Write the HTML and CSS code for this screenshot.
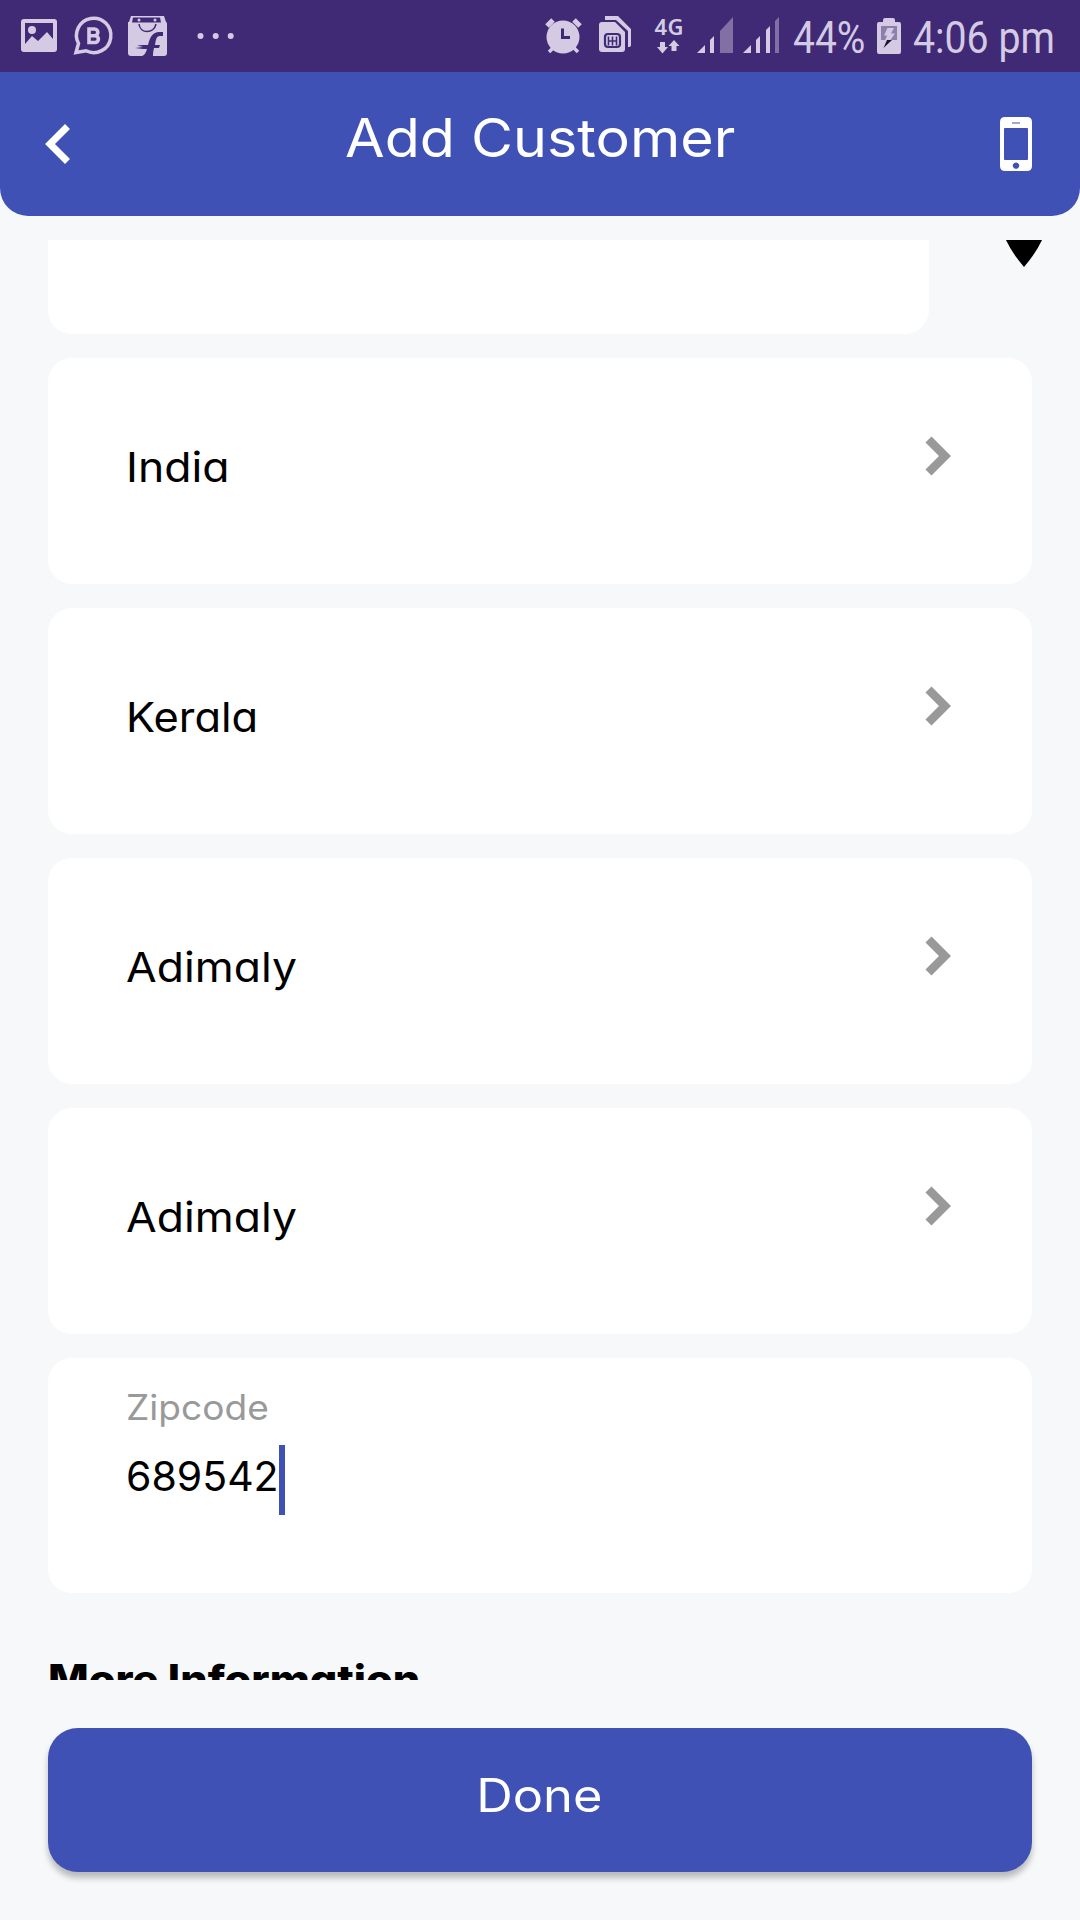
FILE: index.html
```html
<!DOCTYPE html>
<html lang="en">
<head>
<meta charset="utf-8">
<title>Add Customer</title>
<link rel="stylesheet" href="styles.css">
</head>
<body>
<div class="status-bar">
  <svg class="status-left" width="260" height="72" viewBox="0 0 260 72">
    <path fill-rule="evenodd" d="M24 19h30q3 0 3 3v27q0 3-3 3H24q-3 0-3-3V22q0-3 3-3zM25 23v21l7-8 6 5 9-9 6 7V23z"/>
    <circle cx="32" cy="30" r="4"/>
    <path class="line" d="M76 52.500L78.500 43.500A17.200 17.200 0 1 1 86 50.800z" stroke-width="3.500"/>
    <path class="line" d="M89 29h5.500a3.300 3.300 0 0 1 0 6.700H89zM89 35.700h6a3.300 3.300 0 0 1 0 6.800h-6z" stroke-width="3.600"/>
    <path d="M128 22h38q1 0 1 2v29q0 3-3 3H131q-3 0-3-3V24z"/>
    <path d="M131 16h33l2 6h-37z"/>
    <path class="cut" d="M133 17.500h27l1 5h-29z"/>
    <circle cx="139" cy="20" r="1.500"/><circle cx="155" cy="20" r="1.500"/>
    <path class="cut-line" d="M139 24c1 10 15 10 17 0" stroke-width="1.500"/>
    <path class="cut" d="M142 56c3-1 4-4 5-7h-4l-8-1 8-1-6-1.500 6-.5h5c2-8 5-13 11-13h4v4h-3c-4 0-4 4-5 9h5l-1 3h-5c-1 4-1 6-1 8z"/>
    <circle cx="200.500" cy="36" r="3"/><circle cx="215.700" cy="36" r="3"/><circle cx="230.700" cy="36" r="3"/>
  </svg>
  <svg class="status-right" width="260" height="72" viewBox="530 0 260 72">
    <circle cx="563" cy="37" r="16.500"/>
    <path class="line" d="M547 26l6-6M580 26l-6-6" stroke-width="5"/>
    <path class="line" d="M554 47l-5 5M573 47l5 5" stroke-width="3.500"/>
    <path class="cut-line" d="M562.500 28.500v9h7.500" stroke-width="3"/>
    <path d="M605 16h13l13 13v16q0 2-3 2V31l-12-11h-11q0-3 0-4z"/>
    <path d="M602 22h13l10 10v17q0 3-3 3h-20q-3 0-3-3V25q0-3 3-3z"/>
    <rect class="cut-line" x="605" y="34" width="15" height="13" rx="3" stroke-width="2.200"/>
    <path class="cut-line" d="M608.500 36.500v9M612.500 36.500v9M616.500 36.500v9M608.500 41h8" stroke-width="1.600"/>
    <text class="network" x="654.500" y="35" textLength="29">4G</text>
    <path d="M660 42h5v5h3l-5.500 6.500-5.500-6.500h3zM671.500 51v-5h-3l5.500-6 5.500 6h-3v5z"/>
    <path d="M697 53l8-8v8zM710 40l4-4v17h-4z"/>
    <path class="dim" d="M720 31l13-14v36h-13z"/>
    <path d="M743 53l8-8v8zM756 40l4-4v17h-4zM766 30l4-4v27h-4z"/>
    <path class="dim" d="M775 21l4-4v36h-4z"/>
  </svg>
  <div class="status-text percent">44%</div>
  <svg class="battery" width="26" height="72" viewBox="876 0 26 72">
    <path d="M883 22v-2q0-2 2-2h8q2 0 2 2v2h4q2 0 2 2v28q0 2-2 2h-20q-2 0-2-2V24q0-2 2-2z"/>
    <path class="dim-cut" d="M881 26h16v14h-16z"/>
    <path d="M887.500 28h6.500l-3 5.500h4l-5 7h-5l2-5h-3z"/>
    <path class="bolt" d="M887 40h5l-8.500 8z"/>
  </svg>
  <div class="status-text clock">4:06 pm</div>
</div>

<header class="app-bar">
  <svg class="back" width="26" height="40" viewBox="0 0 26 40"><path d="M22.500 2.500L5 20l17.500 17.500" fill="none" stroke="#fff" stroke-width="7"/></svg>
  <h1 class="title">Add Customer</h1>
  <svg class="phone" width="32" height="54" viewBox="0 0 32 54"><path fill="#fff" fill-rule="evenodd" d="M5 0h22q5 0 5 5v44q0 5-5 5H5q-5 0-5-5V5q0-5 5-5zM5 11q-1 0-1 1v30q0 1 1 1h22q1 0 1-1V12q0-1-1-1zM12 5.500v1h8v-1zM16 45.400a3.200 3.200 0 1 0 .01 0z"/></svg>
</header>

<main class="form">
  <div class="first-row">
    <div class="card partial"></div>
    <svg width="37" height="27" viewBox="0 0 37 27"><path d="M0 0h36Q30 13 18 27 6 13 0 0z"/></svg>
  </div>
  <div class="card select"><span class="value india">India</span><svg class="chevron" width="26" height="40" viewBox="0 0 26 40"><path d="M3.500 3.500L20 20 3.500 36.500"/></svg></div>
  <div class="card select"><span class="value kerala">Kerala</span><svg class="chevron" width="26" height="40" viewBox="0 0 26 40"><path d="M3.500 3.500L20 20 3.500 36.500"/></svg></div>
  <div class="card select"><span class="value">Adimaly</span><svg class="chevron" width="26" height="40" viewBox="0 0 26 40"><path d="M3.500 3.500L20 20 3.500 36.500"/></svg></div>
  <div class="card select"><span class="value">Adimaly</span><svg class="chevron" width="26" height="40" viewBox="0 0 26 40"><path d="M3.500 3.500L20 20 3.500 36.500"/></svg></div>
  <div class="card zip">
    <label class="label">Zipcode</label>
    <div class="entry"><span class="value digits">689542</span><span class="caret"></span></div>
  </div>
  <h2 class="section">More Information</h2>
</main>
<button class="done"><span>Done</span></button>
</body>
</html>
```
FILE: styles.css
```css
* { box-sizing: border-box; }
body {
  margin: 0;
  width: 1080px;
  height: 1920px;
  overflow: hidden;
  background: #f7f8fa;
  color: #000;
  font-family: Inter, "Liberation Sans", sans-serif;
  font-feature-settings: "cv11";
}
svg { display: block; flex: none; }

.status-bar { display: flex; height: 72px; background: #402a75; fill: #d4cae3; color: #d4cae3; }
.status-right { margin-left: 270px; }
.line { fill: none; stroke: #d4cae3; }
.cut { fill: #402a75; }
.cut-line { fill: none; stroke: #402a75; }
.dim { fill: #8070a4; }
.dim-cut { fill: #8d7fac; }
.bolt { fill: #1c1530; }
.network { font: 600 22px "Noto Sans", sans-serif; }
.status-text {
  font-family: Roboto, sans-serif;
  font-size: 45px;
  line-height: 75px;
  white-space: nowrap;
  transform: scaleX(.865);
  transform-origin: left;
}
.percent { width: 83px; margin-left: 3px; }
.clock { width: 150px; margin-left: 11px; transform: scaleX(.872); }

.app-bar {
  display: flex;
  justify-content: space-between;
  height: 144px;
  padding: 0 48px 0 45px;
  border-radius: 0 0 28px 28px;
  background: #3f51b5;
  color: #fff;
}
.back { margin-top: 52px; }
.phone { margin-top: 45px; }
.title {
  margin: 0 0 0 9px;
  font-size: 53px;
  font-weight: 400;
  line-height: 133px;
  letter-spacing: 0;
  white-space: nowrap;
  transform: scaleX(1.083);
}

.form { height: 1440px; margin-top: 24px; padding: 0 48px; overflow: hidden; }
.card { margin-bottom: 24px; border-radius: 24px; background: #fff; }
.first-row { display: flex; gap: 76.500px; margin-right: -12px; }
.partial { width: 881px; height: 94px; border-radius: 0 0 24px 24px; }
.select { display: flex; justify-content: space-between; height: 226px; padding: 78px 81px 0 78px; }
.chevron { margin-top: -.5px; }
.chevron path { fill: none; stroke: #999; stroke-width: 8.500; }
.value {
  margin-left: -.5px;
  font-size: 41px;
  line-height: 62px;
  letter-spacing: 0;
  transform: scaleX(1.085);
  transform-origin: left;
}
.kerala { transform: scaleX(1.06); }
.digits { margin-left: 0; transform: none; }
.zip { height: 235px; padding: 26px 78px 0; }
.label {
  display: block;
  font-size: 35px;
  line-height: 46px;
  color: #999;
  transform: scaleX(1.06);
  transform-origin: left;
}
.entry { display: flex; margin-top: 15px; }
.caret { width: 6px; height: 70px; background: #3f51b5; }
.section {
  margin: 61px 0 0;
  font-size: 39px;
  font-weight: 800;
  line-height: 50px;
  transform: scaleX(1.108);
  transform-origin: left;
}

.done {
  display: block;
  width: 984px;
  height: 144px;
  margin: 48px auto 0;
  padding: 0 0 11px;
  border: 0;
  border-radius: 30px;
  background: #3f51b5;
  box-shadow: 0 6px 6px rgba(0, 0, 0, .25);
  color: #fff;
  font: 400 46px/60px Inter, sans-serif;
}
.done span { display: inline-block; margin-left: -1px; transform: scaleX(1.1); }
```
